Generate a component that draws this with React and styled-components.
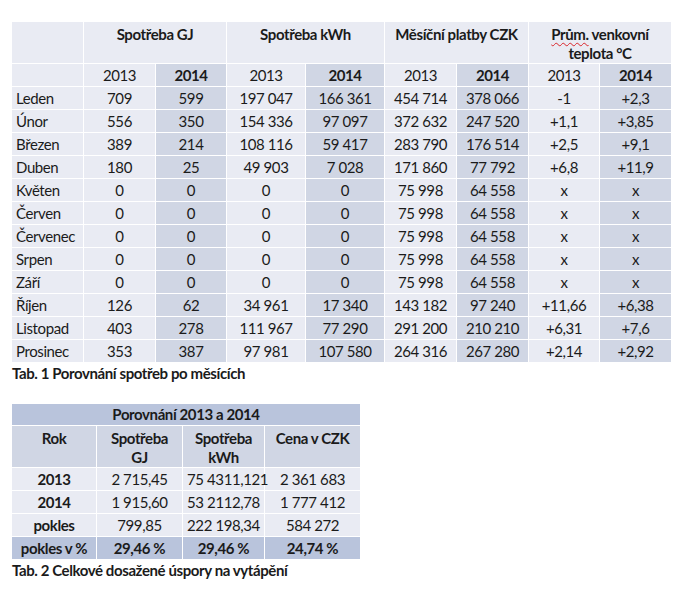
import React from "react";
import styled, { createGlobalStyle } from "styled-components";

const GlobalStyle = createGlobalStyle`
  body {
    margin: 0;
    background: #ffffff;
    font-family: Lato, "Liberation Sans", sans-serif;
    color: #1b1b1b;
  }
`;

const Page = styled.div`
  padding: 21px 0 0 11px;
  width: 681px;
  height: 598px;
  box-sizing: border-box;
  letter-spacing: -0.4px;
`;

const Table = styled.table`
  border-collapse: collapse;
  table-layout: fixed;
  width: ${(p) => p.w}px;
  font-size: 15px;
`;

const Cell = styled.td`
  border: 1px solid #ffffff;
  padding: 0 4px;
  height: ${(p) => p.h || 23}px;
  line-height: 19px;
  text-align: ${(p) => (p.left ? "left" : "center")};
  vertical-align: ${(p) => (p.top ? "top" : "middle")};
  padding-top: ${(p) => (p.top ? "3px" : "0")};
  font-weight: ${(p) => (p.bold ? 700 : 400)};
  background: ${(p) =>
    p.tone === "dark" ? "#b9c4dc" : p.tone === "mid" ? "#d0d6e4" : "#e9ebf3"};
  white-space: nowrap;
  box-sizing: border-box;
`;

const Spell = styled.span`
  text-decoration: underline wavy #d9252a;
  text-decoration-thickness: 1px;
  text-underline-offset: 2px;
`;

const Caption = styled.div`
  font-weight: 700;
  font-size: 15px;
  line-height: 19px;
  margin: ${(p) => p.m};
  padding-left: 1px;
`;

const months = [
  ["Leden", "709", "599", "197 047", "166 361", "454 714", "378 066", "-1", "+2,3"],
  ["Únor", "556", "350", "154 336", "97 097", "372 632", "247 520", "+1,1", "+3,85"],
  ["Březen", "389", "214", "108 116", "59 417", "283 790", "176 514", "+2,5", "+9,1"],
  ["Duben", "180", "25", "49 903", "7 028", "171 860", "77 792", "+6,8", "+11,9"],
  ["Květen", "0", "0", "0", "0", "75 998", "64 558", "x", "x"],
  ["Červen", "0", "0", "0", "0", "75 998", "64 558", "x", "x"],
  ["Červenec", "0", "0", "0", "0", "75 998", "64 558", "x", "x"],
  ["Srpen", "0", "0", "0", "0", "75 998", "64 558", "x", "x"],
  ["Září", "0", "0", "0", "0", "75 998", "64 558", "x", "x"],
  ["Říjen", "126", "62", "34 961", "17 340", "143 182", "97 240", "+11,66", "+6,38"],
  ["Listopad", "403", "278", "111 967", "77 290", "291 200", "210 210", "+6,31", "+7,6"],
  ["Prosinec", "353", "387", "97 981", "107 580", "264 316", "267 280", "+2,14", "+2,92"],
];

const totals = [
  ["2013", "2 715,45", "75 4311,121", "2 361 683"],
  ["2014", "1 915,60", "53 2112,78", "1 777 412"],
  ["pokles", "799,85", "222 198,34", "584 272"],
];

const widths1 = [72, 72, 71, 79, 79, 72, 72, 71, 72];
const widths2 = [85, 86, 82, 96];

export default function App() {
  return (
    <Page>
      <GlobalStyle />
      <Table w={660}>
        <colgroup>
          {widths1.map((w, i) => (
            <col key={i} style={{ width: w }} />
          ))}
        </colgroup>
        <tbody>
          <tr>
            <Cell h={42} />
            <Cell h={42} colSpan={2} bold top>
              Spotřeba GJ
            </Cell>
            <Cell h={42} colSpan={2} bold top>
              Spotřeba kWh
            </Cell>
            <Cell h={42} colSpan={2} bold top>
              Měsíční platby CZK
            </Cell>
            <Cell h={42} colSpan={2} bold top>
              <Spell>Prům.</Spell> venkovní
              <br />
              teplota °C
            </Cell>
          </tr>
          <tr>
            <Cell />
            {[0, 1, 2, 3].map((i) => (
              <React.Fragment key={i}>
                <Cell>2013</Cell>
                <Cell tone="mid" bold>
                  2014
                </Cell>
              </React.Fragment>
            ))}
          </tr>
          {months.map((row) => (
            <tr key={row[0]}>
              <Cell left>{row[0]}</Cell>
              {row.slice(1).map((v, i) => (
                <Cell key={i} tone={i % 2 === 1 ? "mid" : undefined}>
                  {v}
                </Cell>
              ))}
            </tr>
          ))}
        </tbody>
      </Table>
      <Caption m="1px 0 0 0">Tab. 1 Porovnání spotřeb po měsících</Caption>

      <Table w={349} style={{ marginTop: 20 }}>
        <colgroup>
          {widths2.map((w, i) => (
            <col key={i} style={{ width: w }} />
          ))}
        </colgroup>
        <tbody>
          <tr>
            <Cell colSpan={4} tone="dark" bold h={22}>
              Porovnání 2013 a 2014
            </Cell>
          </tr>
          <tr>
            <Cell tone="mid" bold top h={42}>
              Rok
            </Cell>
            <Cell tone="mid" bold top h={42}>
              Spotřeba
              <br />
              GJ
            </Cell>
            <Cell tone="mid" bold top h={42}>
              Spotřeba
              <br />
              kWh
            </Cell>
            <Cell tone="mid" bold top h={42}>
              Cena v CZK
            </Cell>
          </tr>
          {totals.map((row) => (
            <tr key={row[0]}>
              <Cell bold>{row[0]}</Cell>
              {row.slice(1).map((v, i) => (
                <Cell key={i}>{v}</Cell>
              ))}
            </tr>
          ))}
          <tr>
            <Cell tone="dark" bold>
              pokles v %
            </Cell>
            <Cell tone="dark" bold>
              29,46 %
            </Cell>
            <Cell tone="dark" bold>
              29,46 %
            </Cell>
            <Cell tone="dark" bold>
              24,74 %
            </Cell>
          </tr>
        </tbody>
      </Table>
      <Caption m="1px 0 0 0">Tab. 2 Celkové dosažené úspory na vytápění</Caption>
    </Page>
  );
}
